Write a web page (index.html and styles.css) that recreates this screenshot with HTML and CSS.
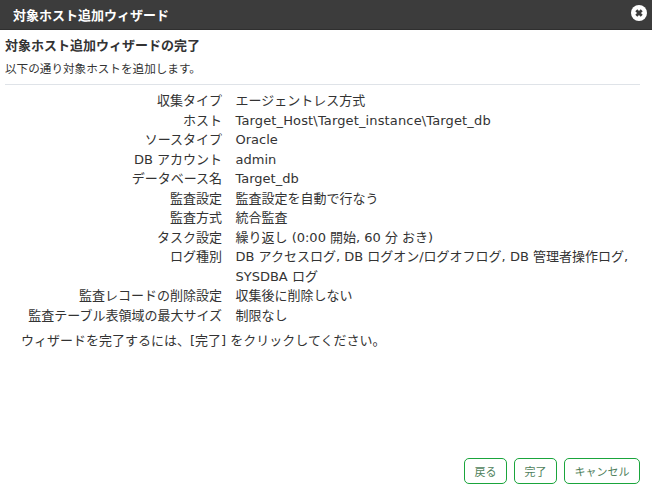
FILE: index.html
```html
<!DOCTYPE html>
<html lang="ja">
<head>
    <meta charset="UTF-8">
    <title>対象ホスト追加ウィザード</title>
    <link rel="stylesheet" href="styles.css">
</head>
<body>
    <div class="wizard">
        <!-- Title bar -->
        <div class="wizard-header">
            <span class="wizard-title">対象ホスト追加ウィザード</span>
            <svg class="close-icon" width="16" height="16" viewBox="0 0 16 16">
                <circle cx="8" cy="8" r="8" fill="#fff"/>
                <path d="M5.3 5.3L10.7 10.7M10.7 5.3L5.3 10.7" stroke="#3c3c3c" stroke-width="2.8"/>
            </svg>
        </div>

        <!-- Body -->
        <div class="wizard-body">
            <div class="step-title">対象ホスト追加ウィザードの完了</div>
            <div class="step-lead">以下の通り対象ホストを追加します。</div>
            <table class="summary">
                <tr><th>収集タイプ</th><td>エージェントレス方式</td></tr>
                <tr><th>ホスト</th><td class="path">Target_Host\Target_instance\Target_db</td></tr>
                <tr><th>ソースタイプ</th><td>Oracle</td></tr>
                <tr><th>DB アカウント</th><td>admin</td></tr>
                <tr><th>データベース名</th><td>Target_db</td></tr>
                <tr><th>監査設定</th><td>監査設定を自動で行なう</td></tr>
                <tr><th>監査方式</th><td>統合監査</td></tr>
                <tr><th>タスク設定</th><td>繰り返し (0:00 開始, 60 分 おき)</td></tr>
                <tr><th>ログ種別</th><td>DB アクセスログ, DB ログオン/ログオフログ, DB 管理者操作ログ, SYSDBA ログ</td></tr>
                <tr><th>監査レコードの削除設定</th><td>収集後に削除しない</td></tr>
                <tr><th>監査テーブル表領域の最大サイズ</th><td>制限なし</td></tr>
            </table>
            <div class="step-note">ウィザードを完了するには、[完了] をクリックしてください。</div>
        </div>

        <!-- Footer buttons -->
        <div class="wizard-footer">
            <button class="btn btn-back">戻る</button>
            <button class="btn btn-finish">完了</button>
            <button class="btn btn-cancel">キャンセル</button>
        </div>
    </div>
</body>
</html>
```

FILE: styles.css
```css
html, body {
    margin: 0;
    padding: 0;
    height: 100%;
}

body {
    font-family: "DejaVu Sans", "Noto Sans CJK JP", sans-serif;
    font-size: 13px;
    color: #333;
    background: #fff;
}

.wizard {
    display: flex;
    flex-direction: column;
    height: 491px;
}

.wizard-header {
    display: flex;
    justify-content: space-between;
    align-items: flex-start;
    height: 30px;
    padding: 5px 4px 0 13px;
    box-sizing: border-box;
    background: #3c3c3c;
    border-bottom: 1px solid #2f2f2f;
}

.wizard-title {
    color: #fff;
    font-weight: 700;
    font-size: 13px;
    line-height: 22px;
}

.close-icon {
    display: block;
    margin-right: 1px;
}

.wizard-body {
    flex: 1;
    padding: 0 12px 0 5px;
}

.step-title {
    font-weight: 700;
    font-size: 13px;
    line-height: 18px;
    margin-top: 7px;
}

.step-lead {
    font-size: 11.6px;
    line-height: 16px;
    margin-top: 6px;
    padding-bottom: 7px;
    border-bottom: 1px solid #dfe3e8;
}

.summary {
    border-collapse: collapse;
    margin-top: 6px;
}

.summary th {
    width: 217px;
    padding: 0 7px 0 0;
    font-weight: 400;
    text-align: right;
    vertical-align: top;
    white-space: nowrap;
    line-height: 19.5px;
}

.summary td {
    width: 400px;
    padding: 0 0 0 6.5px;
    vertical-align: top;
    line-height: 19.5px;
}

.summary .path {
    letter-spacing: 0.14px;
}

.step-note {
    margin: 7px 0 0 16px;
    line-height: 18px;
}

.wizard-footer {
    display: flex;
    justify-content: flex-end;
    gap: 7px;
    padding: 0 12px 7px 0;
}

.btn {
    height: 26px;
    padding: 0;
    font-family: inherit;
    font-size: 11px;
    color: #4f7f5c;
    background: #fff;
    border: 1px solid #1aa53c;
    border-radius: 5px;
}

.btn-back,
.btn-finish {
    width: 43px;
}

.btn-cancel {
    width: 76px;
}
```
